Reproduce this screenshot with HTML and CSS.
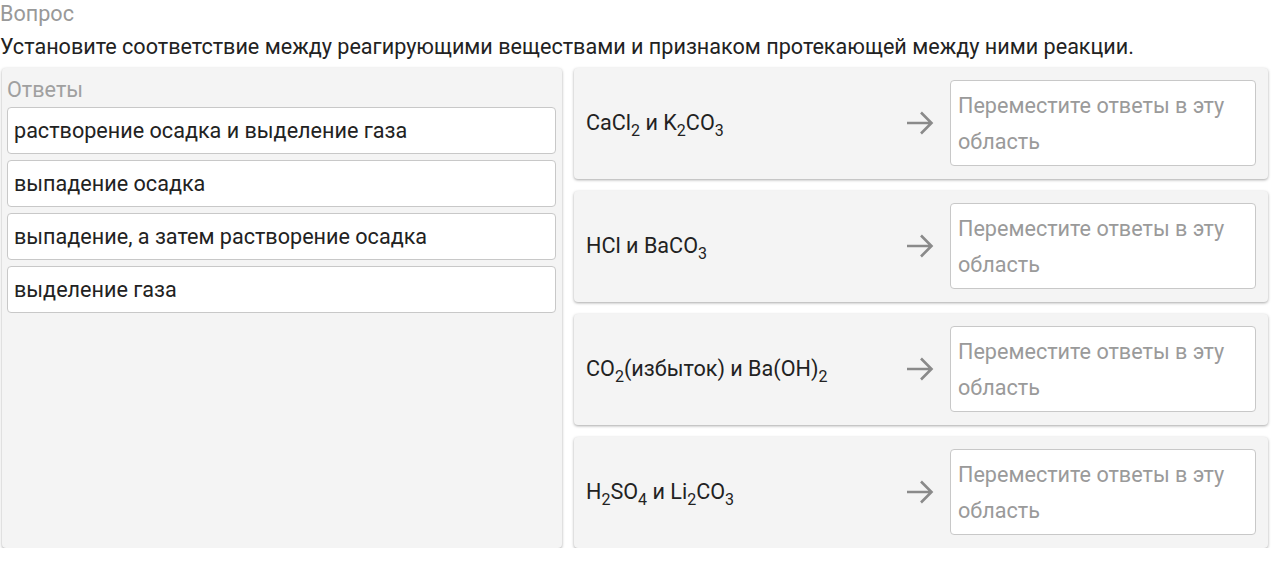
FILE: index.html
```html
<!DOCTYPE html>
<html lang="ru">
<head>
    <meta charset="UTF-8">
    <title>Вопрос</title>
    <link rel="stylesheet" href="styles.css">
</head>
<body>
    <div class="page">
        <div class="caption">Вопрос</div>
        <div class="question">Установите соответствие между реагирующими веществами и признаком протекающей между ними реакции.</div>

        <div class="match">
            <!-- Answers pool -->
            <div class="answers">
                <div class="answers-title">Ответы</div>
                <div class="answer">растворение осадка и выделение газа</div>
                <div class="answer">выпадение осадка</div>
                <div class="answer">выпадение, а затем растворение осадка</div>
                <div class="answer">выделение газа</div>
            </div>

            <!-- Targets -->
            <div class="targets">
                <div class="target">
                    <div class="target-label">CaCl<sub>2</sub> и K<sub>2</sub>CO<sub>3</sub></div>
                    <svg class="arrow" width="28" height="24" viewBox="0 0 28 24"><path d="M1 12h25M15 1.5 25.5 12 15 22.5" fill="none" stroke="#8a8a8a" stroke-width="2.6"/></svg>
                    <div class="drop">Переместите ответы в эту область</div>
                </div>
                <div class="target">
                    <div class="target-label">HCl и BaCO<sub>3</sub></div>
                    <svg class="arrow" width="28" height="24" viewBox="0 0 28 24"><path d="M1 12h25M15 1.5 25.5 12 15 22.5" fill="none" stroke="#8a8a8a" stroke-width="2.6"/></svg>
                    <div class="drop">Переместите ответы в эту область</div>
                </div>
                <div class="target">
                    <div class="target-label">CO<sub>2</sub>(избыток) и Ba(OH)<sub>2</sub></div>
                    <svg class="arrow" width="28" height="24" viewBox="0 0 28 24"><path d="M1 12h25M15 1.5 25.5 12 15 22.5" fill="none" stroke="#8a8a8a" stroke-width="2.6"/></svg>
                    <div class="drop">Переместите ответы в эту область</div>
                </div>
                <div class="target">
                    <div class="target-label">H<sub>2</sub>SO<sub>4</sub> и Li<sub>2</sub>CO<sub>3</sub></div>
                    <svg class="arrow" width="28" height="24" viewBox="0 0 28 24"><path d="M1 12h25M15 1.5 25.5 12 15 22.5" fill="none" stroke="#8a8a8a" stroke-width="2.6"/></svg>
                    <div class="drop">Переместите ответы в эту область</div>
                </div>
            </div>
        </div>
    </div>
</body>
</html>
```

FILE: styles.css
```css
* {
    margin: 0;
    padding: 0;
    box-sizing: border-box;
}
body {
    font-family: Roboto, 'Noto Sans', sans-serif;
    font-size: 21.6px;
    color: #222;
    background: #fff;
}
.page {
    width: 1270px;
}
.caption {
    color: #999;
    line-height: 28px;
}
.question {
    line-height: 38px;
    margin-bottom: 2px;
}
.match {
    display: grid;
    grid-template-columns: 560px 694px;
    column-gap: 12px;
    padding-left: 2px;
}
.answers {
    background: #f4f4f4;
    border-radius: 4px;
    box-shadow: 0 1px 3px rgba(0, 0, 0, 0.35);
    padding: 8px 6px 12px 5px;
    height: 480px;
}
.answers-title {
    color: #a0a0a0;
    line-height: 28px;
    padding-left: 0;
    margin-bottom: 3px;
}
.answer {
    background: #fff;
    border: 1px solid #c8c8c8;
    border-radius: 4px;
    height: 47px;
    line-height: 45px;
    padding-left: 6px;
    margin-bottom: 6px;
}
.targets {
    display: flex;
    flex-direction: column;
    gap: 12px;
}
.target {
    background: #f4f4f4;
    border-radius: 4px;
    box-shadow: 0 1px 3px rgba(0, 0, 0, 0.35);
    display: flex;
    align-items: center;
    height: 111px;
    padding: 12px 12px 13px 12px;
}
.target-label {
    flex: 1;
    line-height: 24px;
}
.target-label sub {
    font-size: 16px;
    vertical-align: -6px;
    line-height: 0;
}
.arrow {
    display: block;
    margin-right: 16px;
}
.drop {
    width: 306px;
    height: 86px;
    background: #fff;
    border: 1px solid #c8c8c8;
    border-radius: 4px;
    color: #9a9a9a;
    line-height: 36px;
    padding: 7px 7px 0 7px;
}
```
